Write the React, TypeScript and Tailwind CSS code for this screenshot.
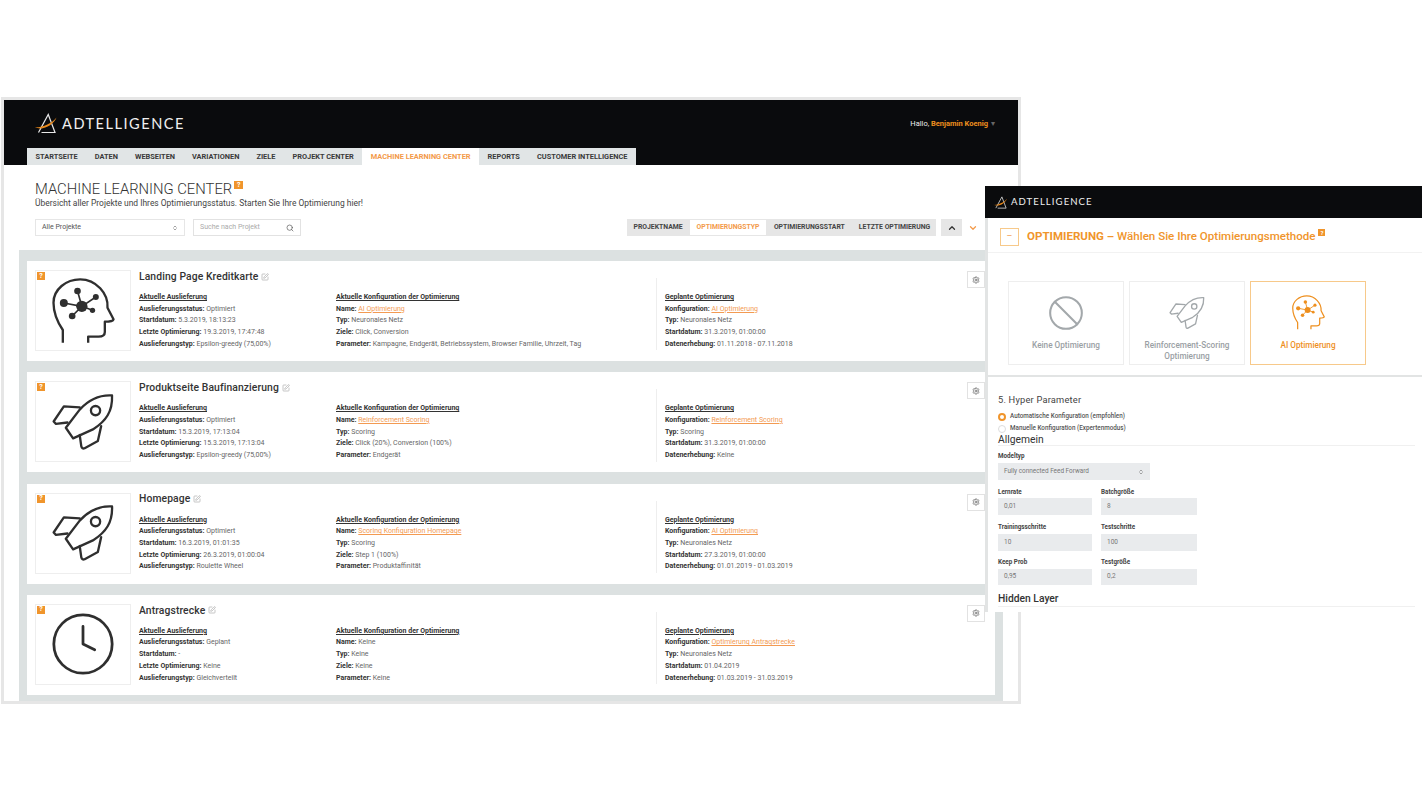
import React from "react";
import { Search, ChevronUp, ChevronDown, Clock, Ban, ChevronsUpDown, SquarePen, Settings } from "lucide-react";

const Logo = ({ small }: { small?: boolean }) => (
  <div className="flex items-center">
    <svg viewBox="0 0 32 28" className={small ? "h-[15px] w-[15px]" : "h-[23px] w-[24px]"}>
      <path d="M6 26 L19 2 L28 26 L10 26" fill="none" stroke="#e8e8e8" strokeWidth="1.6" />
      <path d="M1 19 C 10 20 24 14 30 6 C 26 16 12 24 1 19 Z" fill="#e8891c" />
    </svg>
    <span
      className={
        small
          ? "ml-[3px] font-['Lato'] text-[9.6px] font-normal tracking-[1.05px] text-[#f0f0f0]"
          : "ml-[4px] font-['Lato'] text-[14.6px] font-normal tracking-[1.5px] text-[#f0f0f0]"
      }
    >
      ADTELLIGENCE
    </span>
  </div>
);

const Help = ({ small, large }: { small?: boolean; large?: boolean }) => (
  <span
    className={
      small
        ? "flex h-[7px] w-[7px] items-center justify-center bg-[#f0952c] text-[6px] font-bold leading-none text-white"
        : large
        ? "flex h-[8px] w-[9px] items-center justify-center bg-[#f0952c] text-[7px] font-bold leading-none text-white"
        : "flex h-[8px] w-[8px] items-center justify-center bg-[#f0952c] text-[7px] font-bold leading-none text-white"
    }
  >
    ?
  </span>
);

const Brain = ({ color = "#2f2f2f", className = "" }: { color?: string; className?: string }) => (
  <svg viewBox="60 35 200 210" className={className} fill="none" stroke={color} strokeWidth="7" strokeLinejoin="round">
    <path d="M98 235 V197 C84 176 70 150 70 115 C70 75 108 45 150 45 C198 45 235 88 232 130 L250 165 C248 172 235 172 224 172 V203 C224 214 216 217 205 217 H174 V235" />
    <path d="M155 126 L142 80 M155 126 L197 98 M155 126 L187 138 M155 126 L126 155 M155 126 L101 116" strokeWidth="5" />
    <g fill={color} stroke="none">
      <circle cx="155" cy="126" r="17" />
      <circle cx="142" cy="80" r="10" />
      <circle cx="197" cy="98" r="9" />
      <circle cx="187" cy="138" r="8" />
      <circle cx="126" cy="155" r="10" />
      <circle cx="101" cy="116" r="12" />
    </g>
  </svg>
);

const Rocket = ({ color = "#2f2f2f", className = "" }: { color?: string; className?: string }) => (
  <svg viewBox="60 40 200 185" className={className} fill="none" stroke={color} strokeWidth="7" strokeLinejoin="round" strokeLinecap="round">
    <path d="M248 52 C215 50 180 62 150 95 L108 150 L130 182 L190 155 C230 130 250 100 248 52 Z" />
    <path d="M150 88 L102 85 L71 131 L78 138 L113 134" />
    <path d="M150 172 L155 207 Q157 215 165 212 L205 190 L215 145" />
    <circle cx="198" cy="98" r="14" />
  </svg>
);

type Row = [string, string, boolean?];
type Column = { head: string; rows: Row[] };
type Project = { title: string; icon: "brain" | "rocket" | "clock"; cols: [Column, Column, Column] };

const del = "Aktuelle Auslieferung";
const conf = "Aktuelle Konfiguration der Optimierung";
const plan = "Geplante Optimierung";

const projects: Project[] = [
  {
    title: "Landing Page Kreditkarte",
    icon: "brain",
    cols: [
      { head: del, rows: [["Auslieferungsstatus:", "Optimiert"], ["Startdatum:", "5.3.2019, 18:13:23"], ["Letzte Optimierung:", "19.3.2019, 17:47:48"], ["Auslieferungstyp:", "Epsilon-greedy (75,00%)"]] },
      { head: conf, rows: [["Name:", "AI Optimierung", true], ["Typ:", "Neuronales Netz"], ["Ziele:", "Click, Conversion"], ["Parameter:", "Kampagne, Endgerät, Betriebssystem, Browser Familie, Uhrzeit, Tag"]] },
      { head: plan, rows: [["Konfiguration:", "AI Optimierung", true], ["Typ:", "Neuronales Netz"], ["Startdatum:", "31.3.2019, 01:00:00"], ["Datenerhebung:", "01.11.2018 - 07.11.2018"]] },
    ],
  },
  {
    title: "Produktseite Baufinanzierung",
    icon: "rocket",
    cols: [
      { head: del, rows: [["Auslieferungsstatus:", "Optimiert"], ["Startdatum:", "15.3.2019, 17:13:04"], ["Letzte Optimierung:", "15.3.2019, 17:13:04"], ["Auslieferungstyp:", "Epsilon-greedy (75,00%)"]] },
      { head: conf, rows: [["Name:", "Reinforcement Scoring", true], ["Typ:", "Scoring"], ["Ziele:", "Click (20%), Conversion (100%)"], ["Parameter:", "Endgerät"]] },
      { head: plan, rows: [["Konfiguration:", "Reinforcement Scoring", true], ["Typ:", "Scoring"], ["Startdatum:", "31.3.2019, 01:00:00"], ["Datenerhebung:", "Keine"]] },
    ],
  },
  {
    title: "Homepage",
    icon: "rocket",
    cols: [
      { head: del, rows: [["Auslieferungsstatus:", "Optimiert"], ["Startdatum:", "16.3.2019, 01:01:35"], ["Letzte Optimierung:", "26.3.2019, 01:00:04"], ["Auslieferungstyp:", "Roulette Wheel"]] },
      { head: conf, rows: [["Name:", "Scoring Konfiguration Homepage", true], ["Typ:", "Scoring"], ["Ziele:", "Step 1 (100%)"], ["Parameter:", "Produktaffinität"]] },
      { head: plan, rows: [["Konfiguration:", "AI Optimierung", true], ["Typ:", "Neuronales Netz"], ["Startdatum:", "27.3.2019, 01:00:00"], ["Datenerhebung:", "01.01.2019 - 01.03.2019"]] },
    ],
  },
  {
    title: "Antragstrecke",
    icon: "clock",
    cols: [
      { head: del, rows: [["Auslieferungsstatus:", "Geplant"], ["Startdatum:", "-"], ["Letzte Optimierung:", "Keine"], ["Auslieferungstyp:", "Gleichverteilt"]] },
      { head: conf, rows: [["Name:", "Keine"], ["Typ:", "Keine"], ["Ziele:", "Keine"], ["Parameter:", "Keine"]] },
      { head: plan, rows: [["Konfiguration:", "Optimierung Antragstrecke", true], ["Typ:", "Neuronales Netz"], ["Startdatum:", "01.04.2019"], ["Datenerhebung:", "01.03.2019 - 31.03.2019"]] },
    ],
  },
];

const tabs = ["STARTSEITE", "DATEN", "WEBSEITEN", "VARIATIONEN", "ZIELE", "PROJEKT CENTER", "MACHINE LEARNING CENTER", "REPORTS", "CUSTOMER INTELLIGENCE"];

const InfoCol = ({ col, className }: { col: Column; className: string }) => (
  <div className={className}>
    <div className="h-[12.6px] font-bold leading-[12px] text-[#333] underline">{col.head}</div>
    {col.rows.map(([k, v, link]) => (
      <div key={k} className="h-[11.7px] whitespace-nowrap leading-[11.7px]">
        <span className="font-bold text-[#333]">{k}</span>{" "}
        <span className={link ? "text-[#f39a52] underline" : "text-[#666]"}>{v}</span>
      </div>
    ))}
  </div>
);

const ProjectCard = ({ p }: { p: Project }) => (
  <div className="relative flex h-[100px] bg-white pl-[8px] pt-[9px]">
    <div className="relative flex h-[81px] w-[96px] shrink-0 items-center justify-center border border-[#eeeeee]">
      <div className="absolute left-[1px] top-[1px]">
        <Help />
      </div>
      {p.icon === "brain" && <Brain className="h-[70px] w-[67px]" />}
      {p.icon === "rocket" && <Rocket className="h-[62px] w-[66px]" />}
      {p.icon === "clock" && <Clock className="h-[70px] w-[70px] text-[#2f2f2f]" strokeWidth={0.95} />}
    </div>
    <div className="ml-[8px] flex-1 text-[7px]">
      <div className="flex h-[13px] items-center font-medium">
        <span className="text-[10.35px] tracking-[0.1px] text-[#333]">{p.title}</span>
        <SquarePen className="ml-[3px] h-[8px] w-[8px] text-[#aaa]" />
      </div>
      <div className="mt-[8px] flex">
        <InfoCol col={p.cols[0]} className="w-[197px]" />
        <InfoCol col={p.cols[1]} className="w-[320px]" />
        <div className="-mt-[13px] mr-[8px] w-px self-stretch bg-[#eeeeee]" />
        <InfoCol col={p.cols[2]} className="" />
      </div>
    </div>
    <div className="absolute right-[10px] top-[10px] flex h-[17px] w-[18px] items-center justify-center border border-[#e2e2e2] bg-white">
      <Settings className="h-[8px] w-[8px] text-[#777]" strokeWidth={2.6} />
    </div>
  </div>
);

const Method = ({ label, active, children }: { label: React.ReactNode; active?: boolean; children: React.ReactNode }) => (
  <div
    className={
      "flex h-[84px] w-[116px] flex-col items-center border pt-[13px] text-center text-[8.2px] font-medium leading-[11px] " +
      (active ? "border-[#f7c98a] text-[#ee8f1e]" : "border-[#eeeeee] text-[#9aa0a4]")
    }
  >
    <div className="flex h-[35px] items-center">{children}</div>
    <div className="mt-[10px]">{label}</div>
  </div>
);

const Field = ({ label, value, w, h = "h-[17px]", flush }: { label: string; value: string; w: string; h?: string; flush?: boolean }) => (
  <div className={w}>
    <div className="h-[12px] text-[6.3px] font-bold leading-[12px] text-[#444]">{label}</div>
    <div className={(flush ? "" : "mt-[1px] ") + "flex items-center bg-[#e9ebed] pl-[6px] text-[6.5px] text-[#777] " + h}>{value}</div>
  </div>
);

export default function App() {
  return (
    <div className="relative h-[800px] w-[1422px] overflow-hidden bg-white font-['Roboto',sans-serif]">
      <div className="pt-[97px] pl-px">
        <div className="flex h-[607px] w-[1020px] flex-col border-[3px] border-[#e6e6e6] bg-white">
          <header className="relative h-[65px] shrink-0 bg-[#0a0b0d]">
            <div className="pl-[30px] pt-[12px]">
              <Logo />
            </div>
            <div className="absolute right-[23px] top-[18px] text-[7.5px] font-normal text-[#eee]">
              Hallo, <span className="font-bold text-[#ee8f1e]">Benjamin Koenig</span>
              <span className="ml-[3px] text-[#666]">▾</span>
            </div>
            <nav className="absolute bottom-0 left-[23px] flex h-[17px] items-center bg-[#e1e5e6] text-[7.4px] font-bold text-[#3a3a3a]">
              {tabs.map((t, i) =>
                i === 6 ? (
                  <span key={t} className="flex h-full items-center bg-white px-[8.5px] text-[#f39a4a]">
                    {t}
                  </span>
                ) : (
                  <span key={t} className="px-[8.5px]">
                    {t}
                  </span>
                )
              )}
            </nav>
          </header>

          <div className="h-[85px] shrink-0 pl-[31px]">
            <div className="flex pt-[15px]">
              <h1 className="text-[14.8px] font-light leading-[18px] text-[#333]">MACHINE LEARNING CENTER</h1>
              <div className="ml-[2px] mt-[1px]">
                <Help large />
              </div>
            </div>
            <p className="text-[8.45px] leading-[11px] text-[#444]">
              Übersicht aller Projekte und Ihres Optimierungsstatus. Starten Sie Ihre Optimierung hier!
            </p>
            <div className="mt-[10px] flex items-center text-[7px]">
              <div className="flex h-[17px] w-[150px] items-center justify-between border border-[#e6e6e6] px-[6px] text-[#555]">
                Alle Projekte
                <ChevronsUpDown className="h-[6px] w-[6px] text-[#444]" />
              </div>
              <div className="ml-[8px] flex h-[17px] w-[108px] items-center justify-between border border-[#e2e2e2] px-[6px] text-[#aaa]">
                Suche nach Projekt
                <Search className="h-[8px] w-[8px] text-[#555]" />
              </div>
              <div className="ml-[326px] flex h-[17px] items-center bg-[#e6e6e6] text-[6.85px] font-bold text-[#444]">
                <span className="px-[6.5px]">PROJEKTNAME</span>
                <span className="flex h-full items-center border border-[#e6e6e6] bg-white px-[6.5px] text-[#f39a4a]">OPTIMIERUNGSTYP</span>
                <span className="pl-[7px] pr-[7px]">OPTIMIERUNGSSTART</span>
                <span className="pl-[7px] pr-[6px]">LETZTE OPTIMIERUNG</span>
              </div>
              <div className="ml-[5px] flex h-[17px] w-[21px] items-center justify-center bg-[#e6e6e6]">
                <ChevronUp className="h-[10px] w-[10px] text-[#333]" strokeWidth={3} />
              </div>
              <div className="flex h-[17px] w-[22px] items-center justify-center">
                <ChevronDown className="h-[10px] w-[10px] text-[#f39a4a]" strokeWidth={3} />
              </div>
            </div>
          </div>

          <div className="ml-[15px] flex w-[984px] flex-1 flex-col gap-[11.3px] bg-[#dce1e1] pl-[8px] pr-[8px] pt-[11px]">
            {projects.map((p) => (
              <ProjectCard key={p.title} p={p} />
            ))}
          </div>
        </div>
      </div>

      <aside className="absolute left-[985px] top-[186px] h-[426px] w-[437px] bg-white">
        <div className="flex h-[32px] items-center bg-[#0a0b0d] pl-[8px]">
          <Logo small />
        </div>
        <div className="h-[394px] border-l-[3px] border-[#e2e4e4]">
          <div className="flex h-[35px] items-center border-b border-[#f2f2f2] pl-[12px] pt-[4px]">
            <div className="flex h-[18px] w-[19px] items-center justify-center border border-[#f7c98a] text-[9px] text-[#f39a4a]">–</div>
            <span className="ml-[8px] text-[11.55px] font-bold text-[#f0952c]">OPTIMIERUNG –</span>
            <span className="ml-[3px] text-[11.55px] font-medium text-[#f0952c]">Wählen Sie Ihre Optimierungsmethode</span>
            <div className="mb-[9px] ml-[3px]">
              <Help small />
            </div>
          </div>
          <div className="flex h-[124px] gap-[5px] border-b-2 border-[#e2e4e4] pl-[20px] pt-[28px]">
            <Method label="Keine Optimierung">
              <Ban className="h-[38px] w-[38px] text-[#a3a8ab]" strokeWidth={1.3} />
            </Method>
            <Method label={<>Reinforcement-Scoring<br />Optimierung</>}>
              <Rocket color="#a3a8ab" className="h-[36px] w-[38px]" />
            </Method>
            <Method label="AI Optimierung" active>
              <Brain color="#ee8f1e" className="h-[37px] w-[35px]" />
            </Method>
          </div>
          <div className="pl-[10px] pt-[17px]">
            <div className="h-[12px] text-[9.3px] font-normal leading-[12px] tracking-[0.2px] text-[#444]">5. Hyper Parameter</div>
            <div className="mt-[5px] flex h-[12px] items-center text-[6.3px] font-medium text-[#555]">
              <span className="h-[8px] w-[8px] rounded-full border-[2px] border-[#f0952c] bg-white" />
              <span className="ml-[4px]">Automatische Konfiguration (empfohlen)</span>
            </div>
            <div className="flex h-[12px] items-center text-[6.3px] font-medium text-[#555]">
              <span className="h-[8px] w-[8px] rounded-full border border-[#ddd] bg-white" />
              <span className="ml-[4px]">Manuelle Konfiguration (Expertenmodus)</span>
            </div>
            <div className="-mt-[1px] mr-[7px] h-[12px] border-b border-[#f0f0f0] text-[10.3px] leading-[11px] text-[#333]">Allgemein</div>
            <div className="mt-[4px]">
              <div className="h-[12px] text-[6.3px] font-bold leading-[12px] text-[#444]">Modeltyp</div>
              <div className="mt-[1px] flex h-[17px] w-[152px] items-center justify-between bg-[#e9ebed] px-[6px] text-[6.4px] text-[#777]">
                Fully connected Feed Forward
                <ChevronsUpDown className="h-[6px] w-[6px] text-[#555]" />
              </div>
            </div>
            <div className="mt-[6px] flex gap-[9px]">
              <Field label="Lernrate" value="0,01" w="w-[94px]" flush />
              <Field label="Batchgröße" value="8" w="w-[96px]" flush />
            </div>
            <div className="mt-[6px] flex gap-[9px]">
              <Field label="Trainingsschritte" value="10" w="w-[94px]" />
              <Field label="Testschritte" value="100" w="w-[96px]" />
            </div>
            <div className="mt-[5px] flex gap-[9px]">
              <Field label="Keep Prob" value="0,95" w="w-[94px]" h="h-[16px]" />
              <Field label="Testgröße" value="0,2" w="w-[96px]" h="h-[16px]" />
            </div>
            <div className="mr-[7px] mt-[8px] border-b border-[#f0f0f0] pb-[1px] text-[10.3px] font-medium leading-[12px] text-[#333]">Hidden Layer</div>
          </div>
        </div>
      </aside>
    </div>
  );
}
